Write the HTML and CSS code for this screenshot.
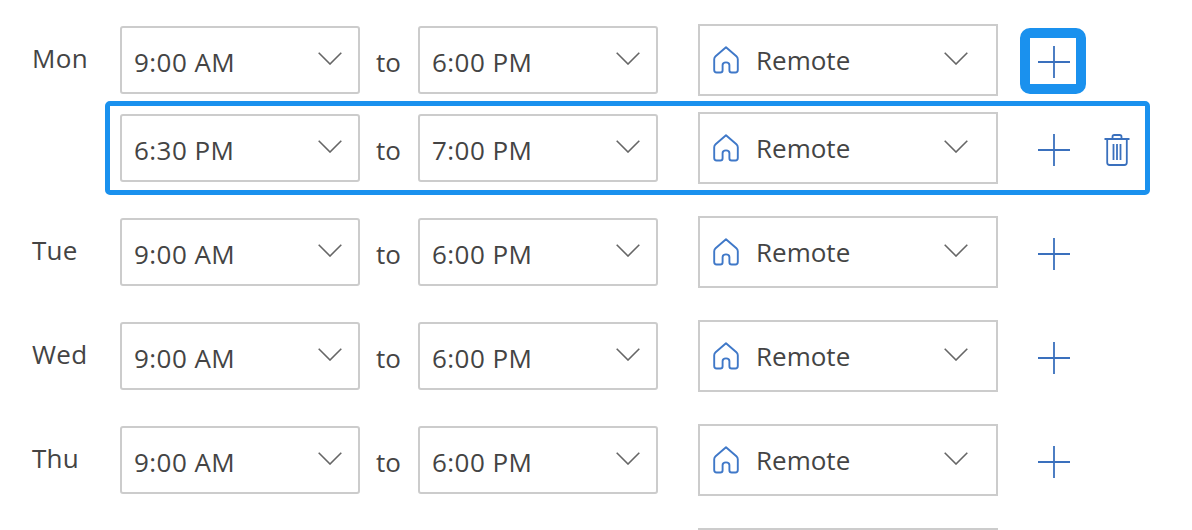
FILE: index.html
```html
<!DOCTYPE html>
<html lang="en">
<head>
<meta charset="utf-8">
<title>Working hours</title>
<link rel="stylesheet" href="styles.css">
</head>
<body>
<svg class="defs" width="0" height="0" aria-hidden="true">
  <symbol id="chev" viewBox="0 0 24 13"><path d="M.7.7 12 12 23.3.7" fill="none" stroke="#666" stroke-width="1.6"/></symbol>
  <symbol id="home" viewBox="0 0 26 28"><path d="M13 1.2 2.600 10.200c-.9.8-1.400 1.800-1.400 3V24c0 1.500 1 2.500 2.500 2.500h3.600c1.500 0 2.300-1 2.300-2.300v-5.200c0-1.500 1.100-2.600 3.400-2.600s3.400 1.100 3.400 2.600v5.200c0 1.300.8 2.300 2.300 2.300h3.600c1.500 0 2.500-1 2.500-2.500V13.200c0-1.200-.5-2.200-1.400-3Z" fill="none" stroke="#3f78c8" stroke-width="1.900" stroke-linejoin="round"/></symbol>
  <symbol id="plus" viewBox="0 0 32 32"><path d="M16 0v32M0 16h32" fill="none" stroke="#3a70bd" stroke-width="1.800"/></symbol>
  <symbol id="trash" viewBox="0 0 26 32"><path d="M.5 5h25M8.500 5V2.800C8.500 1.700 9.300 1 10.300 1h5.400c1 0 1.800.7 1.800 1.800V5M3.200 5v23.500c0 1.500 1 2.500 2.500 2.500h14.600c1.500 0 2.500-1 2.500-2.500V5M9.500 10v16M13 10v16M16.500 10v16" fill="none" stroke="#3a70bd" stroke-width="1.800"/></symbol>
</svg>
<main class="schedule">

  <section class="day">
    <div class="day-name">Mon</div>
    <div class="entries">
      <div class="entry">
        <div class="select time"><span class="time-value">9:00 AM</span><svg class="chev"><use href="#chev"/></svg></div>
        <span class="to">to</span>
        <div class="select time"><span class="time-value">6:00 PM</span><svg class="chev"><use href="#chev"/></svg></div>
        <div class="select place"><svg class="home"><use href="#home"/></svg><span class="place-value">Remote</span><svg class="chev"><use href="#chev"/></svg></div>
        <button class="icon-btn add focused" aria-label="Add"><svg class="plus"><use href="#plus"/></svg></button>
      </div>
      <div class="entry highlighted">
        <div class="select time"><span class="time-value">6:30 PM</span><svg class="chev"><use href="#chev"/></svg></div>
        <span class="to">to</span>
        <div class="select time"><span class="time-value">7:00 PM</span><svg class="chev"><use href="#chev"/></svg></div>
        <div class="select place"><svg class="home"><use href="#home"/></svg><span class="place-value">Remote</span><svg class="chev"><use href="#chev"/></svg></div>
        <button class="icon-btn add" aria-label="Add"><svg class="plus"><use href="#plus"/></svg></button>
        <button class="icon-btn del" aria-label="Delete"><svg class="trash"><use href="#trash"/></svg></button>
      </div>
    </div>
  </section>

  <section class="day">
    <div class="day-name">Tue</div>
    <div class="entries">
      <div class="entry">
        <div class="select time"><span class="time-value">9:00 AM</span><svg class="chev"><use href="#chev"/></svg></div>
        <span class="to">to</span>
        <div class="select time"><span class="time-value">6:00 PM</span><svg class="chev"><use href="#chev"/></svg></div>
        <div class="select place"><svg class="home"><use href="#home"/></svg><span class="place-value">Remote</span><svg class="chev"><use href="#chev"/></svg></div>
        <button class="icon-btn add" aria-label="Add"><svg class="plus"><use href="#plus"/></svg></button>
      </div>
    </div>
  </section>

  <section class="day">
    <div class="day-name">Wed</div>
    <div class="entries">
      <div class="entry">
        <div class="select time"><span class="time-value">9:00 AM</span><svg class="chev"><use href="#chev"/></svg></div>
        <span class="to">to</span>
        <div class="select time"><span class="time-value">6:00 PM</span><svg class="chev"><use href="#chev"/></svg></div>
        <div class="select place"><svg class="home"><use href="#home"/></svg><span class="place-value">Remote</span><svg class="chev"><use href="#chev"/></svg></div>
        <button class="icon-btn add" aria-label="Add"><svg class="plus"><use href="#plus"/></svg></button>
      </div>
    </div>
  </section>

  <section class="day">
    <div class="day-name">Thu</div>
    <div class="entries">
      <div class="entry">
        <div class="select time"><span class="time-value">9:00 AM</span><svg class="chev"><use href="#chev"/></svg></div>
        <span class="to">to</span>
        <div class="select time"><span class="time-value">6:00 PM</span><svg class="chev"><use href="#chev"/></svg></div>
        <div class="select place"><svg class="home"><use href="#home"/></svg><span class="place-value">Remote</span><svg class="chev"><use href="#chev"/></svg></div>
        <button class="icon-btn add" aria-label="Add"><svg class="plus"><use href="#plus"/></svg></button>
      </div>
    </div>
  </section>

  <div class="next-row"><div class="next-place"></div></div>

</main>
</body>
</html>
```
FILE: styles.css
```css
* { box-sizing: border-box; }

html, body {
  margin: 0;
  height: 530px;
  overflow: hidden;
  background: #fff;
}

body {
  font-family: "Open Sans", "Noto Sans", sans-serif;
  font-size: 26px;
  color: #444;
}

.defs { position: absolute; }

.schedule {
  display: flex;
  flex-direction: column;
  gap: 32px;
  padding: 24px 0 0 32px;
}

.day { display: flex; align-items: flex-start; }

.day-name {
  width: 88px;
  height: 72px;
  padding-bottom: 4px;
  display: flex;
  align-items: center;
  letter-spacing: .3px;
}

.entries { display: flex; flex-direction: column; gap: 16px; }

.entry {
  position: relative;
  display: flex;
  align-items: center;
  height: 72px;
}

.highlighted::after {
  content: "";
  position: absolute;
  inset: -11px -20px -11px -15px;
  border: 5px solid #1a91ee;
  border-radius: 5px;
  pointer-events: none;
}

.select {
  display: flex;
  align-items: center;
  flex: none;
  background: #fff;
  border: 2px solid #ccc;
}

.time {
  width: 240px;
  height: 68px;
  border-radius: 3px;
  padding: 0 16px 0 12px;
}

.time-value { flex: 1; padding-top: 4px; letter-spacing: .45px; }

.to {
  width: 58px;
  flex: none;
  padding: 4px 0 0 16px;
}

.place {
  width: 300px;
  height: 72px;
  margin-left: 40px;
  padding: 0 28px 0 13px;
}

.place-value { flex: 1; margin-left: 17px; }

.chev { width: 24px; height: 13px; margin-bottom: 4px; flex: none; }

.home { width: 26px; height: 28px; margin-bottom: 1px; flex: none; }

.icon-btn {
  display: flex;
  align-items: center;
  justify-content: center;
  padding: 0;
  background: none;
  border: 0;
  flex: none;
}

.add {
  width: 66px;
  height: 66px;
  margin: 2px 0 0 22px;
  padding: 2px 0 0 2px;
}

.focused {
  border: 10px solid #1a91ee;
  border-radius: 10px;
}

.plus { width: 32px; height: 32px; }

.del { margin: 4px 0 0 18px; }

.trash { width: 26px; height: 32px; }

.next-row { height: 2px; padding-left: 666px; }

.next-place { width: 300px; height: 2px; background: #ccc; }
```
